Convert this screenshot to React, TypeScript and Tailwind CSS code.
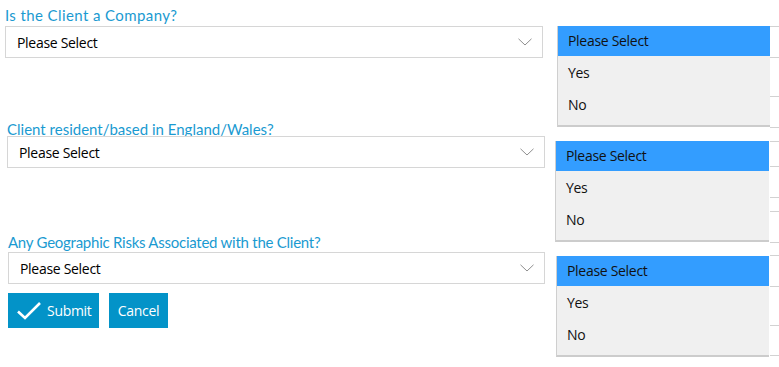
import React from "react";

const font = { fontFamily: '"Open Sans", "Noto Sans", sans-serif' };
const labelFont = { fontFamily: 'Lato, "Open Sans", sans-serif' };

const Chevron = () => (
  <svg width="14" height="8" viewBox="0 0 14 8" fill="none" className="text-[#8f8f8f] mr-[2px]">
    <path d="M0.5 0.8 L7 7 L13.5 0.8" stroke="currentColor" strokeWidth="1" />
  </svg>
);

const SelectBox = ({ className }: { className: string }) => (
  <div className={`flex items-center justify-between h-[32px] bg-white border border-[#d6d6d6] pl-[11px] pr-[8px] text-[14px] tracking-[-0.3px] text-black ${className}`}>
    <span>Please Select</span>
    <Chevron />
  </div>
);

const ListBox = ({ className }: { className: string }) => (
  <div className={`bg-[#f0f0f0] border-l border-[#cfcfcf] border-b-2 border-b-[#cccccc] pb-[5px] text-[14px] tracking-[-0.3px] text-[#111] ${className}`}>
    <div className="h-[30px] bg-[#339dff] flex items-center pl-[10px] pb-[2px]">Please Select</div>
    <div className="h-[32px] flex items-center pl-[10px]">Yes</div>
    <div className="h-[32px] flex items-center pl-[10px]">No</div>
  </div>
);

const Ticks = ({ ys, className }: { ys: number[]; className: string }) => (
  <div className={`relative ${className}`}>
    {ys.map((y) => (
      <div key={y} className="absolute left-0 w-[9px] h-px bg-[#d2d2d2]" style={{ top: y }} />
    ))}
  </div>
);

export default function App() {
  return (
    <div className="w-[779px] h-[367px] bg-white flex overflow-hidden" style={font}>
      <div className="flex flex-col w-[546px]">
        <label style={labelFont} className="ml-[5px] mt-[5px] text-[15px] leading-[20px] tracking-[0.4px] text-[#1a9ad1]">Is the Client a Company?</label>
        <SelectBox className="ml-[5px] mt-[1px] w-[538px]" />
        <label style={labelFont} className="ml-[7px] mt-[61px] text-[15px] leading-[20px] text-[#1a9ad1]">Client resident/based in England/Wales?</label>
        <SelectBox className="ml-[7px] mt-[-3px] w-[538px]" />
        <label style={labelFont} className="ml-[8px] mt-[64px] text-[15px] leading-[20px] tracking-[-0.25px] text-[#1a9ad1]">Any Geographic Risks Associated with the Client?</label>
        <SelectBox className="ml-[8px] mt-[0px] w-[537px]" />
        <div className="flex gap-[10px] ml-[8px] mt-[9px]">
          <button className="h-[35px] w-[91px] bg-[#0393c8] text-white text-[14px] tracking-[-0.3px] flex items-center pl-[8px] gap-[5px]">
            <svg width="26" height="20" viewBox="0 0 26 20" fill="none">
              <path d="M2 10.5 L9 17 L24 2" stroke="white" strokeWidth="2.6" />
            </svg>
            Submit
          </button>
          <button className="h-[35px] w-[59px] bg-[#0393c8] text-white text-[14px] tracking-[-0.3px]">Cancel</button>
        </div>
      </div>
      <div className="flex flex-col">
        <ListBox className="ml-[11px] mt-[26px] w-[213px]" />
        <ListBox className="ml-[9px] mt-[14px] w-[214px]" />
        <ListBox className="ml-[10px] mt-[14px] w-[213px]" />
      </div>
      <Ticks ys={[26, 57, 96, 127, 141, 166, 197, 211, 242, 255, 286, 325, 355]} className="flex-1" />
    </div>
  );
}
